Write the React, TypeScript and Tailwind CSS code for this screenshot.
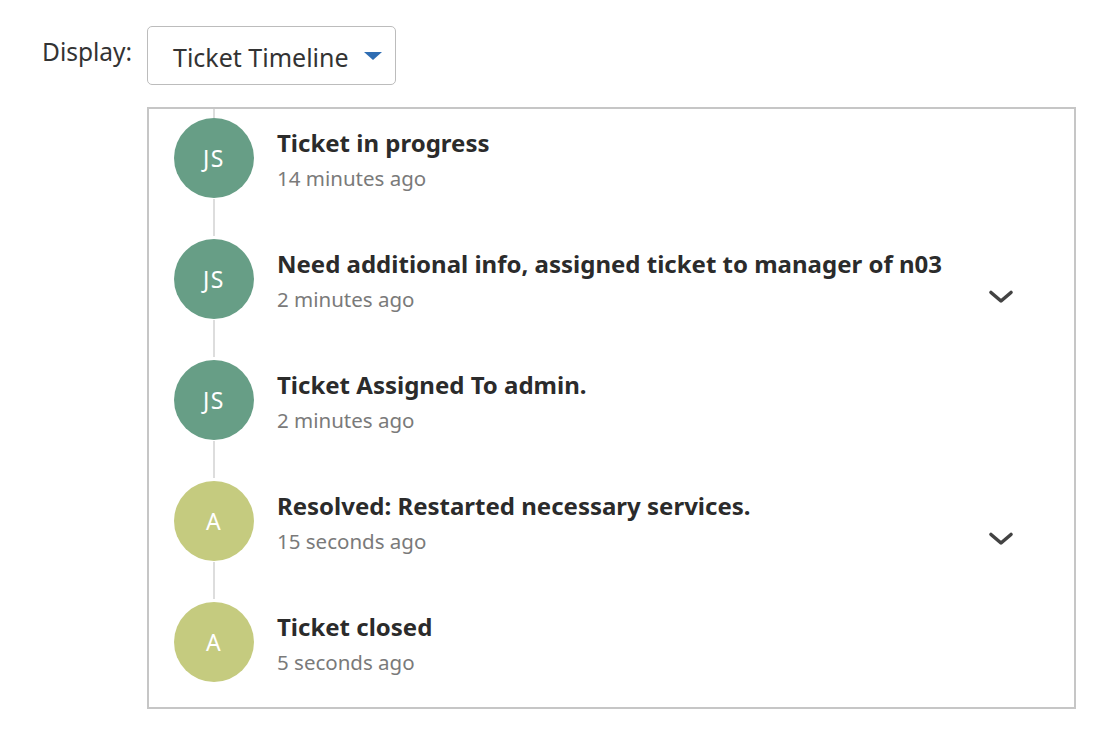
import React from "react";

type Item = { initials: string; color: string; title: string; time: string; chevron?: boolean };

const items: Item[] = [
  { initials: "JS", color: "bg-[#679e86]", title: "Ticket in progress", time: "14 minutes ago" },
  { initials: "JS", color: "bg-[#679e86]", title: "Need additional info, assigned ticket to manager of n03", time: "2 minutes ago", chevron: true },
  { initials: "JS", color: "bg-[#679e86]", title: "Ticket Assigned To  admin.", time: "2 minutes ago" },
  { initials: "A", color: "bg-[#c5cb7f]", title: "Resolved: Restarted necessary services.", time: "15 seconds ago", chevron: true },
  { initials: "A", color: "bg-[#c5cb7f]", title: "Ticket closed", time: "5 seconds ago" },
];

function Chevron() {
  return (
    <svg width="26" height="16" viewBox="0 0 26 16" className="block">
      <path d="M3 3.5 L13 12 L23 3.5" fill="none" stroke="#434343" strokeWidth="3.6" strokeLinecap="round" strokeLinejoin="round" />
    </svg>
  );
}

export default function App() {
  return (
    <div className="w-[1108px] h-[730px] bg-white text-[#2e2e2e]" style={{ fontFamily: '"Noto Sans", "Open Sans", sans-serif' }}>
      <div className="flex items-center pt-[26px] pl-[42px]">
        <span className="text-[24.5px] leading-[30px] text-[#333] w-[105px] mb-[8px] whitespace-nowrap">Display:</span>
        <div className="w-[249px] h-[59px] border border-[#bcbcbc] rounded-[5px] flex items-center pl-[25px]">
          <span className="text-[25px] text-[#333] leading-[30px] mt-[2px] whitespace-nowrap">Ticket Timeline</span>
          <svg width="18" height="8" viewBox="0 0 18 8" className="ml-[15px] mt-[1px]">
            <path d="M0 0 L18 0 L9 8 Z" fill="#2f6db3" />
          </svg>
        </div>
      </div>
      <div className="ml-[147px] mt-[22px] w-[929px] h-[602px] border-2 border-[#c6c6c6]">
        <div className="flex flex-col pl-[25px]">
          <div className="w-[80px] flex justify-center">
            <div className="w-[2px] h-[9px] bg-[#dddddd]" />
          </div>
          {items.map((it, i) => (
            <div key={i} className="flex">
              <div className="w-[80px] flex flex-col items-center shrink-0">
                <div className={`w-[80px] h-[80px] rounded-full ${it.color} flex items-center justify-center text-white text-[23px] tracking-[1.5px]`}>
                  {it.initials}
                </div>
                {i < items.length - 1 && <div className="w-[2px] h-[37px] mt-[1px] mb-[3px] bg-[#dddddd]" />}
              </div>
              <div className="flex-1 flex pl-[23px] pr-[60px]">
                <div className="flex-1 pt-[10px]">
                  <div className="text-[24px] font-bold leading-[30px] text-[#2b2b2b] whitespace-nowrap">{it.title}</div>
                  <div className="text-[20.5px] leading-[26px] text-[#7a7a7a] mt-[7px] whitespace-nowrap">{it.time}</div>
                </div>
                {it.chevron && (
                  <div className="pt-[50px]">
                    <Chevron />
                  </div>
                )}
              </div>
            </div>
          ))}
        </div>
      </div>
    </div>
  );
}
